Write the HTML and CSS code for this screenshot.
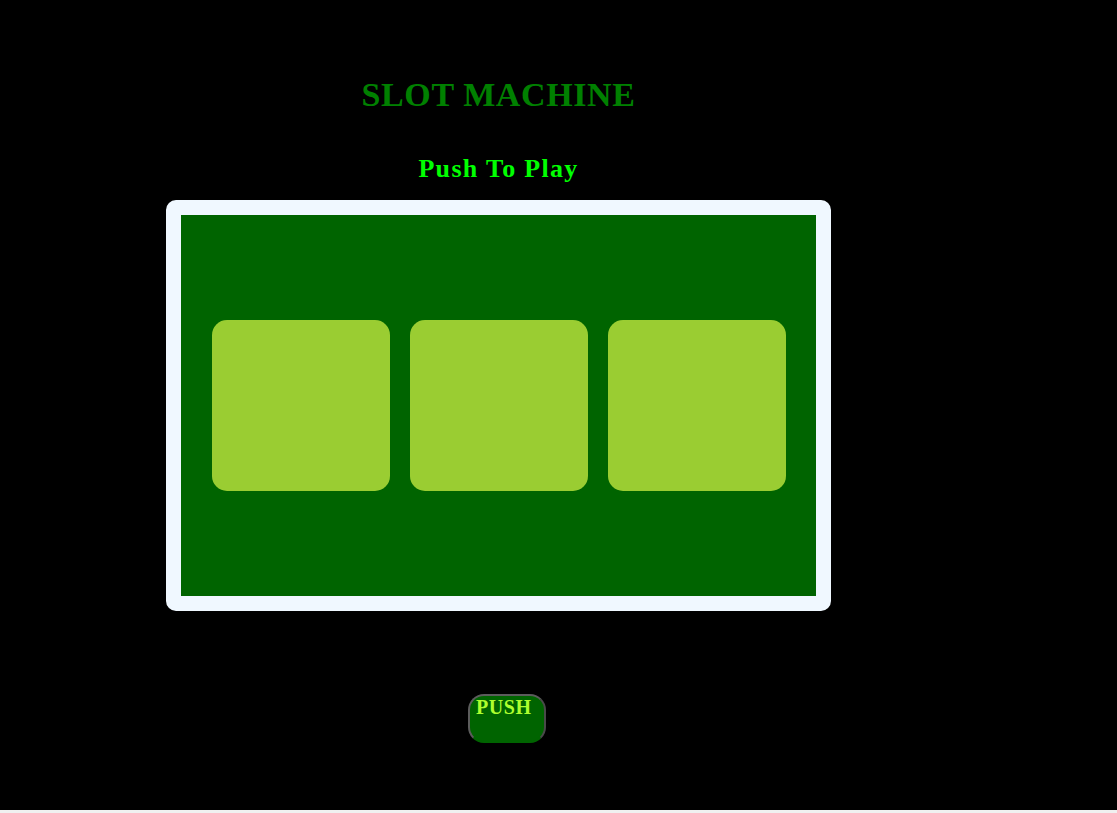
FILE: index.html
```html
<!DOCTYPE html>
<html>
<head>
<meta charset="utf-8">
<link rel="stylesheet" href="styles.css">
</head>
<body>
<div class="page">
  <div class="column">
    <h1 class="title">SLOT MACHINE</h1>
    <h2 class="subtitle">Push To Play</h2>
    <div class="frame">
      <div class="board">
        <div class="reel"></div>
        <div class="reel"></div>
        <div class="reel"></div>
      </div>
    </div>
    <div class="push">PUSH</div>
  </div>
</div>
</body>
</html>
```

FILE: styles.css
```css
html { background: #f0f0f0; }
body { margin: 0; font-family: "Liberation Serif", "Times New Roman", serif; }
.page { background: #000; height: 810px; overflow: hidden; }
.column { width: 997px; display: flex; flex-direction: column; align-items: center; padding-top: 77px; }
.title { margin: 0; color: #008000; font-size: 34px; font-weight: bold; letter-spacing: 0.6px; line-height: 36px; }
.subtitle { margin: 42px 0 0; color: #00ff00; font-size: 26px; font-weight: bold; letter-spacing: 1.3px; line-height: 28px; }
.frame { margin-top: 17px; width: 635px; height: 381px; border: 15px solid #f0f8ff; border-radius: 10px; background: #006400; display: flex; align-items: center; justify-content: center; }
.board { display: flex; gap: 20px; }
.reel { width: 178px; height: 171px; background: #9acd32; border-radius: 15px; }
.push { margin-top: 83px; margin-left: 17px; width: 74px; height: 45px; padding-top: 0; box-sizing: content-box; background: #006400; border: 2px solid; border-color: #5c5c5c #4a4a4a #006400 #5c5c5c; border-radius: 16px; color: #adff2f; font-weight: bold; font-size: 20px; letter-spacing: 0.6px; line-height: 22px; text-align: left; text-indent: 6px; }
```
